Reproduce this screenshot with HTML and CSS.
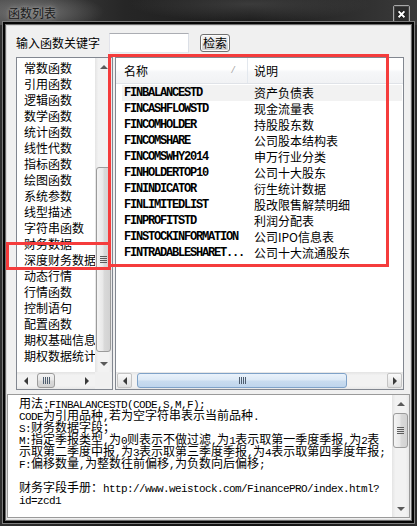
FILE: index.html
```html
<!DOCTYPE html>
<html>
<head>
<title>函数列表</title>
<link rel="stylesheet" href="styles.css">
<meta charset="utf-8">
</head>
<body>
<div class="window">

<div class="titlebar">
<span class="title">函数列表</span>
<div class="close">
<svg width="17" height="18" viewBox="0 0 17 18"><rect x="0.5" y="0.5" width="16" height="17" rx="1.5" fill="#2c2c2c" stroke="#a8a8a8"/><rect x="1.5" y="1.5" width="14" height="15" fill="none" stroke="#444"/><path d="M5.6 6.4 L11.4 12.2 M11.4 6.4 L5.6 12.2" stroke="#111" stroke-width="3.6"/><path d="M5.6 6.4 L11.4 12.2 M11.4 6.4 L5.6 12.2" stroke="#fff" stroke-width="2"/></svg>
</div>
</div>

<div class="client">

<div class="search-row">
<span class="search-label">输入函数关键字</span>
<div class="search-input"></div>
<div class="btn">检索</div>
</div>

<div class="main-row">

<!-- function groups -->
<div class="listbox">
<div class="list-body">
<div class="items">
<div>常数函数</div>
<div>引用函数</div>
<div>逻辑函数</div>
<div>数学函数</div>
<div>统计函数</div>
<div>线性代数</div>
<div>指标函数</div>
<div>绘图函数</div>
<div>系统参数</div>
<div>线型描述</div>
<div>字符串函数</div>
<div>财务数据</div>
<div>深度财务数据</div>
<div>动态行情</div>
<div>行情函数</div>
<div>控制语句</div>
<div>配置函数</div>
<div>期权基础信息</div>
<div>期权数据统计</div>
</div>
<div class="vscroll">
<div class="arrow up"></div>
<div class="gap-top"></div>
<div class="thumb-v tall"><span class="grip-v"></span></div>
<div class="fill"></div>
<div class="arrow down"></div>
</div>
</div>
<div class="hscroll-row">
<div class="hscroll small">
<div class="arrow left"></div>
<div class="thumb-h short"><span class="grip-h"></span></div>
<div class="fill"></div>
<div class="arrow right"></div>
</div>
<div class="corner"></div>
</div>
</div>

<!-- function list -->
<div class="listview">
<div class="lv-header">
<div class="col-name"><span>名称</span><span class="sort">/</span></div>
<div class="col-desc">说明</div>
</div>
<div class="lv-rows">
<div class="row hot"><span class="code">FINBALANCESTD</span><span class="desc">资产负债表</span></div>
<div class="row"><span class="code">FINCASHFLOWSTD</span><span class="desc">现金流量表</span></div>
<div class="row"><span class="code">FINCOMHOLDER</span><span class="desc">持股股东数</span></div>
<div class="row"><span class="code">FINCOMSHARE</span><span class="desc">公司股本结构表</span></div>
<div class="row"><span class="code">FINCOMSWHY2014</span><span class="desc">申万行业分类</span></div>
<div class="row"><span class="code">FINHOLDERTOP10</span><span class="desc">公司十大股东</span></div>
<div class="row"><span class="code">FININDICATOR</span><span class="desc">衍生统计数据</span></div>
<div class="row"><span class="code">FINLIMITEDLIST</span><span class="desc">股改限售解禁明细</span></div>
<div class="row"><span class="code">FINPROFITSTD</span><span class="desc">利润分配表</span></div>
<div class="row"><span class="code">FINSTOCKINFORMATION</span><span class="desc">公司IPO信息表</span></div>
<div class="row"><span class="code">FINTRADABLESHARET...</span><span class="desc">公司十大流通股东</span></div>
</div>
<div class="hscroll">
<div class="abox"><div class="arrow left"></div></div>
<div class="thumb-h hot-thumb"><span class="grip-h"></span></div>
<div class="fill"></div>
<div class="abox"><div class="arrow right"></div></div>
</div>
</div>

</div>

<!-- usage text -->
<div class="usage">
<div class="usage-text">
<div>用法<span class="m">:FINBALANCESTD(CODE,S,M,F);</span></div>
<div><span class="m">CODE</span>为引用品种<span class="m">,</span>若为空字符串表示当前品种<span class="m">.</span></div>
<div><span class="m">S:</span>财务数据字段；</div>
<div><span class="m">M:</span>指定季报类型<span class="m">,</span>为<span class="m">0</span>则表示不做过滤<span class="m">,</span>为<span class="m">1</span>表示取第一季度季报<span class="m">,</span>为<span class="m">2</span>表</div>
<div>示取第二季度中报<span class="m">,</span>为<span class="m">3</span>表示取第三季度季报<span class="m">,</span>为<span class="m">4</span>表示取第四季度年报<span class="m">;</span></div>
<div><span class="m">F:</span>偏移数量<span class="m">,</span>为整数往前偏移<span class="m">,</span>为负数向后偏移<span class="m">;</span></div>
<div>&nbsp;</div>
<div>财务字段手册：<span class="m">http://www.weistock.com/FinancePRO/index.html?</span></div>
<div><span class="m">id=zcd1</span></div>
</div>
<div class="vscroll">
<div class="arrow up"></div>
<div class="thumb-v mini"><span class="grip-v"></span></div>
<div class="fill"></div>
<div class="arrow down"></div>
</div>
</div>

</div>

<!-- red annotation boxes -->
<div class="mark mark-left"></div>
<div class="mark mark-right"></div>

</div>
</body>
</html>
```

FILE: styles.css
```css
*
{
padding:0;
margin:0;
box-sizing:border-box;
}

body
{
margin:0;
width:417px;
height:526px;
overflow:hidden;
background:#000;
font-family:"Noto Sans CJK SC",sans-serif;
font-size:12px;
color:#000;
}

.window
{
position:relative;
width:417px;
height:526px;
display:flex;
flex-direction:column;
background:linear-gradient(to right,#303030,#161616 35%,#121212 65%,#2c2c2c);
}

/* title bar */
.titlebar
{
height:25px;
display:flex;
justify-content:space-between;
align-items:flex-start;
padding:0 7px 0 8px;
background:
radial-gradient(ellipse 70px 20px at 34px 12px,rgba(150,150,150,0.6),transparent),
radial-gradient(ellipse 120px 18px at 250px 4px,rgba(90,90,90,0.5),transparent),
linear-gradient(to right,#4a4a4a,#262626 30%,#1c1c1c 60%,#3a3a3a);
}

.title
{
line-height:25px;
color:#1a1a1a;
text-shadow:0 0 6px rgba(170,170,170,0.9),0 0 3px rgba(150,150,150,0.8);
}

.close
{
margin-top:5px;
width:17px;
height:18px;
}

.close svg
{
display:block;
}

/* client area */
.client
{
flex:1;
margin:0 6px 6px 6px;
background:#f0f0f0;
border:1px solid #dadada;
box-shadow:0 0 0 1px #6c6c6c,0 0 0 3px #050505,0 0 0 4px #7c7c7c;
display:flex;
flex-direction:column;
}

.search-row
{
display:flex;
align-items:center;
height:20px;
margin:7px 0 0 9px;
}

.search-label
{
width:93px;
line-height:16px;
}

.search-input
{
width:80px;
height:20px;
background:#fff;
border:1px solid #abadb3;
border-color:#abadb3 #dbdfe6 #e3e9ef #e2e3ea;
}

.btn
{
margin-left:11px;
width:30px;
height:18px;
line-height:16px;
text-align:center;
border:1px solid #707070;
border-radius:3px;
background:linear-gradient(#f2f2f2,#ebebeb 50%,#dddddd 51%,#cfcfcf);
box-shadow:inset 0 0 0 1px #fcfcfc;
}

.main-row
{
display:flex;
height:333px;
margin:4px 0 0 9px;
}

/* left list */
.listbox
{
width:97px;
height:333px;
border:1px solid #828790;
background:#fff;
display:flex;
flex-direction:column;
}

.list-body
{
flex:1;
display:flex;
overflow:hidden;
}

.items
{
flex:1;
padding:2px 0 0 7px;
overflow:hidden;
white-space:nowrap;
}

.items div
{
height:16px;
line-height:16px;
}

.hscroll-row
{
height:17px;
display:flex;
}

.corner
{
width:17px;
background:#f0f0f0;
}

/* scrollbars */
.vscroll
{
width:17px;
display:flex;
flex-direction:column;
background:linear-gradient(to right,#e4e4e4,#f2f2f2 20%,#f2f2f2 80%,#e8e8e8);
}

.hscroll
{
height:17px;
display:flex;
align-items:center;
background:linear-gradient(#e4e4e4,#f2f2f2 20%,#f2f2f2 80%,#e8e8e8);
}

.hscroll.small
{
flex:1;
}

.fill
{
flex:1;
}

.gap-top
{
height:92px;
}

.arrow
{
width:17px;
height:17px;
display:flex;
align-items:center;
justify-content:center;
flex-shrink:0;
}

.arrow:before
{
content:"";
width:0;
height:0;
}

.arrow.up:before
{
border-left:4px solid transparent;
border-right:4px solid transparent;
border-bottom:4px solid #5a5a5a;
}

.arrow.down:before
{
border-left:4px solid transparent;
border-right:4px solid transparent;
border-top:4px solid #5a5a5a;
}

.arrow.left:before
{
border-top:4px solid transparent;
border-bottom:4px solid transparent;
border-right:4px solid #3a3a3a;
}

.arrow.right:before
{
border-top:4px solid transparent;
border-bottom:4px solid transparent;
border-left:4px solid #3a3a3a;
}

.abox
{
width:15px;
height:15px;
margin:1px;
border:1px solid #c4c4c4;
border-radius:2px;
background:linear-gradient(#fafafa,#ececec 50%,#e0e0e0);
display:flex;
align-items:center;
justify-content:center;
}

.abox .arrow
{
width:13px;
height:13px;
}

.thumb-v
{
margin:0 0 0 1px;
width:15px;
border:1px solid #9b9b9b;
border-radius:3px;
background:linear-gradient(to right,#f4f4f4,#e8e8e8 45%,#d9d9d9 55%,#d2d2d2);
display:flex;
align-items:center;
justify-content:center;
}

.thumb-v.tall
{
height:185px;
}

.thumb-v.mini
{
height:35px;
margin-top:1px;
}

.grip-v
{
width:7px;
height:7px;
background:repeating-linear-gradient(#5c5c5c 0 1px,transparent 1px 2px);
}

.thumb-h
{
height:15px;
border:1px solid #9b9b9b;
border-radius:3px;
background:linear-gradient(#f4f4f4,#e8e8e8 45%,#d9d9d9 55%,#d2d2d2);
display:flex;
align-items:center;
justify-content:center;
}

.thumb-h.short
{
width:18px;
margin-left:3px;
}

.thumb-h.hot-thumb
{
width:210px;
margin-left:4px;
border-color:#7fa2c8;
background:linear-gradient(#eaf2fb,#dce9f6 45%,#c9dcef 55%,#bfd5ec);
}

.grip-h
{
width:7px;
height:7px;
background:repeating-linear-gradient(to right,#4e5e70 0 1px,transparent 1px 2px);
}

/* right list view */
.listview
{
margin-left:2px;
width:289px;
height:333px;
border:1px solid #828790;
background:#fff;
display:flex;
flex-direction:column;
}

.lv-header
{
height:26px;
display:flex;
background:linear-gradient(#ffffff,#ffffff 45%,#f6f7f9 55%,#f1f2f4);
border-bottom:1px solid #e0e3e8;
}

.col-name
{
width:132px;
display:flex;
align-items:center;
justify-content:space-between;
padding:0 11px 0 8px;
border-right:1px solid #e3e8ee;
}

.sort
{
font-family:"Liberation Mono",monospace;
font-size:9px;
color:#a3a3a3;
}

.col-desc
{
display:flex;
align-items:center;
padding-left:6px;
}

.lv-rows
{
flex:1;
padding-top:1px;
}

.row
{
height:16px;
margin:0 1px 0 6px;
display:flex;
align-items:center;
white-space:nowrap;
}

.row.hot
{
background:#f2f2f2;
}

.code
{
width:126px;
padding-left:2px;
font-family:"Liberation Mono",monospace;
font-weight:bold;
font-size:12px;
letter-spacing:-1.2px;
}

.desc
{
padding-left:6px;
line-height:16px;
}

/* usage box */
.usage
{
margin-top:4px;
height:124px;
display:flex;
background:#fff;
border:1px solid #9a9a9a;
}

.usage-text
{
flex:1;
padding:2px 0 0 11px;
overflow:hidden;
white-space:nowrap;
}

.usage-text div
{
height:12px;
line-height:12px;
}

.m
{
font-family:"Liberation Mono",monospace;
font-size:11px;
letter-spacing:-0.6px;
line-height:0;
}

/* red annotation boxes */
.mark
{
position:absolute;
border:3px solid #f53c3c;
}

.mark-left
{
left:6px;
top:242px;
width:105px;
height:28px;
}

.mark-right
{
left:108px;
top:54px;
width:281px;
height:213px;
}
```
